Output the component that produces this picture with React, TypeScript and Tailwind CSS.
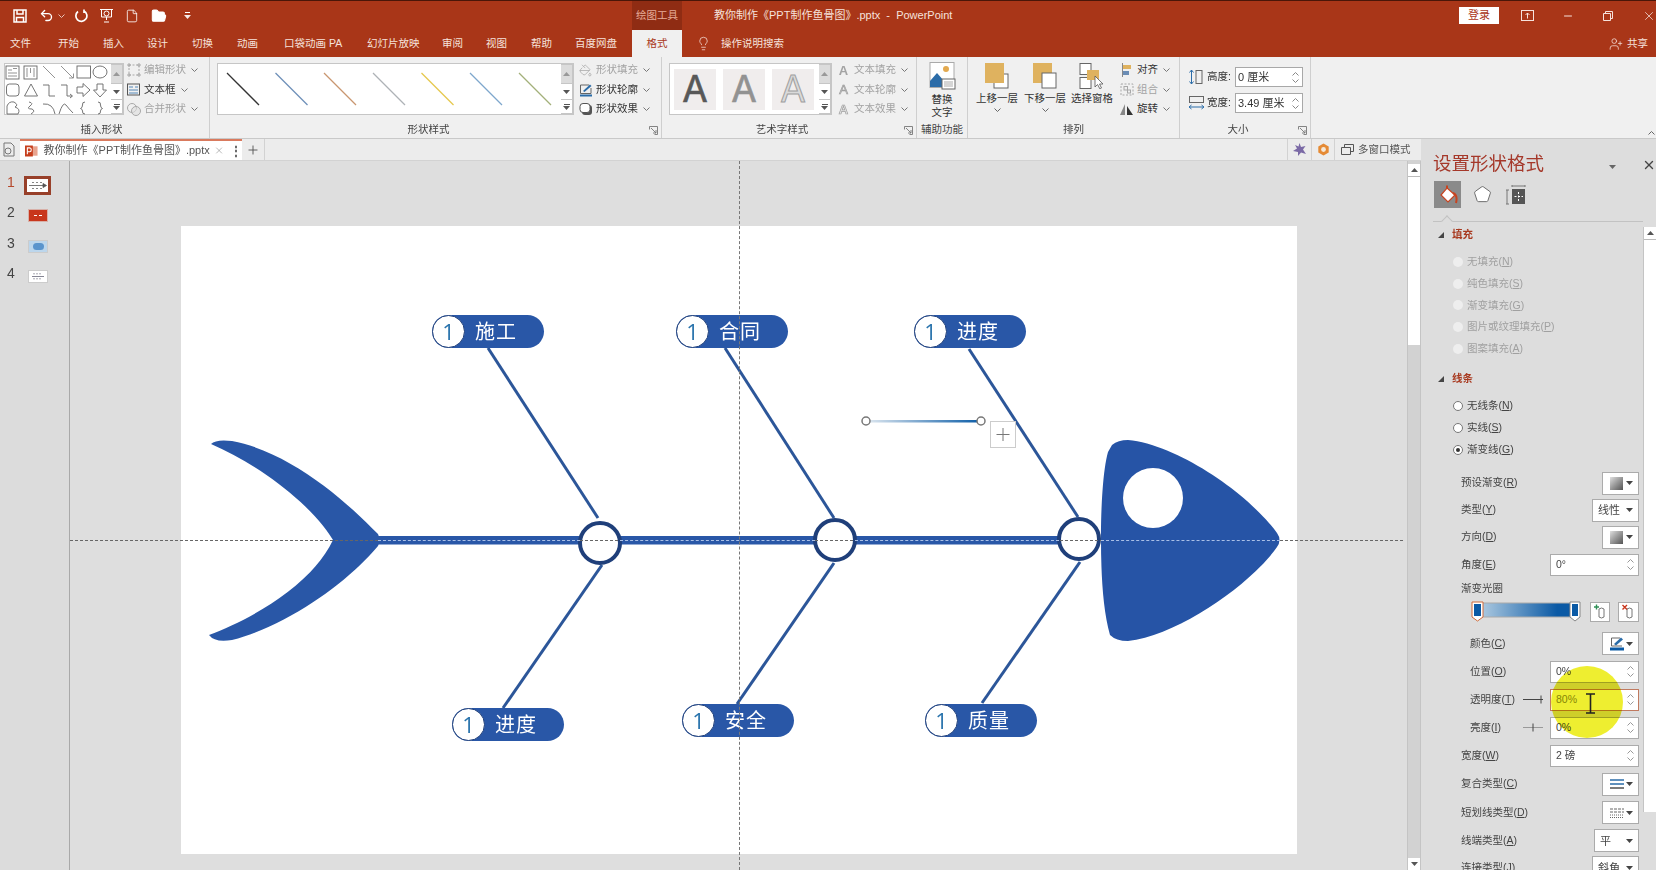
// App.tsx
import React from 'react';
import { Undo2, File, FolderOpen, Lightbulb, UserPlus, X, Minus, Plus, PaintBucket, Pentagon } from 'lucide-react';

const Caret: React.FC<{ className?: string }> = ({ className }) => (
  <svg width="7" height="4" viewBox="0 0 7 4" className={className}>
    <path d="M0.5 0.5 L3.5 3.5 L6.5 0.5" fill="none" stroke="currentColor" strokeWidth="1" />
  </svg>
);

const Drop: React.FC<{ className?: string }> = ({ className }) => (
  <svg width="7" height="4" viewBox="0 0 7 4" className={className}>
    <path d="M0 0 H7 L3.5 4 Z" fill="currentColor" />
  </svg>
);

const GalleryScroll: React.FC = () => (
  <div className="flex h-full w-[12px] flex-col border border-l-0 border-[#c6c6c6] text-[#555]">
    <div className="flex h-[18px] items-center justify-center bg-[#dcdcdc] text-[#999]">
      <Drop className="rotate-180" />
    </div>
    <div className="flex h-[17px] items-center justify-center border-y border-[#c6c6c6] bg-white">
      <Drop />
    </div>
    <div className="flex flex-1 flex-col items-center justify-center gap-[1px] bg-white">
      <div className="h-px w-[6px] bg-[#555]" />
      <Drop />
    </div>
  </div>
);

const GroupLabel: React.FC<{ text: string; className?: string; launcher?: boolean }> = ({ text, className, launcher }) => (
  <div className={`flex h-[16px] items-center justify-center text-[10.5px] text-[#444] ${className ?? ''}`}>
    {text}
    {launcher && (
      <svg width="9" height="9" viewBox="0 0 9 9" className="absolute bottom-[3px] right-[3px] text-[#777]">
        <path d="M0.5 3.5 V0.5 H8.5 V8.5 H5.5 M2 2 L7 7 M4 7 H7 V4" fill="none" stroke="currentColor" strokeWidth="0.9" />
      </svg>
    )}
  </div>
);

const MiniRow: React.FC<{ icon: React.ReactNode; text: string; off?: boolean; caret?: boolean; className?: string }> = ({ icon, text, off, caret = true, className }) => (
  <div className={`flex h-[19.5px] items-center text-[10.5px] ${off ? 'text-[#a3a3a3]' : 'text-[#333]'} ${className ?? ''}`}>
    <span className="mr-[3px] flex w-[15px] justify-center">{icon}</span>
    <span>{text}</span>
    {caret && <Caret className="ml-[5px] text-[#777]" />}
  </div>
);

const ShapesGrid: React.FC = () => (
  <svg viewBox="4 63 106 52" className="block h-[52px] w-[106px]" fill="none" stroke="#666" strokeWidth="0.9">
    <rect x="5" y="65" width="13" height="13" />
    <path d="M7 69 H11 M7 72 H16 M7 75 H16 M12 67.5 H16" strokeWidth="0.7" />
    <rect x="23" y="65" width="13" height="13" />
    <path d="M26 67 V76 M33 67 V76 M29.5 67 V72" strokeWidth="0.7" />
    <path d="M42 65 L54 77" stroke="#888" />
    <path d="M60 65 L72 77 M68 77 H72.5 V72.5" stroke="#888" />
    <rect x="76" y="65" width="13.5" height="12" />
    <ellipse cx="99" cy="71" rx="7" ry="6" />
    <rect x="5.5" y="83" width="12.5" height="12" rx="3" />
    <path d="M30 83 L36.5 95 H23.5 Z" />
    <path d="M42 84 H48 V95 H54" />
    <path d="M60 84 H66 V95 H71 M69 93 L71.5 95 L69 97" />
    <path d="M76 86 H82 V82.5 L89 89 L82 95.5 V92 H76 Z" />
    <path d="M96 83 H102 V89 H105.5 L99 96 L92.5 89 H96 Z" />
    <path d="M6 113 V105 Q8 100 13 101 Q18 104 14 106 Q20 108 17 113 Z" />
    <path d="M28 101 Q33 102 29 105 Q25 108 31 108 Q35 110 30 113" />
    <path d="M42 103 Q52 102 54 113" />
    <path d="M58 113 Q62 100 65 104 Q68 108 72 112" />
    <path d="M84 101 Q81 101 81.5 104 Q81.5 107 79.5 107.5 Q81.5 108 81.5 110 Q81 113 84 113" />
    <path d="M97 101 Q100 101 99.5 104 Q99.5 107 101.5 107.5 Q99.5 108 99.5 110 Q100 113 97 113" />
  </svg>
);

const LineGallery: React.FC = () => (
  <svg viewBox="0 0 343 50" className="block h-[50px] w-[343px]" strokeWidth="1.3">
    <path d="M9 9 L41 41" stroke="#333" />
    <path d="M57.5 9 L89.5 41" stroke="#6d8fb8" />
    <path d="M106 9 L138 41" stroke="#c99670" />
    <path d="M155 9 L187 41" stroke="#aeb2b6" />
    <path d="M203.5 9 L235.5 41" stroke="#e6c84c" />
    <path d="M252 9 L284 41" stroke="#7ea7cc" />
    <path d="M301 9 L333 41" stroke="#a3b07a" />
  </svg>
);

const ArtA: React.FC<{ className: string }> = ({ className }) => (
  <div className={`flex h-[41px] w-[42px] items-center justify-center bg-[#f0eded] font-['Inter',sans-serif] text-[37px] font-normal ${className}`}>A</div>
);

const Ribbon: React.FC = () => (
  <div className="flex h-[82px] border-b border-[#c9c9c9] bg-[#f0f0f0]">
    {/* 插入形状 */}
    <div className="relative flex w-[210px] flex-col border-r border-[#cfcfcf] pt-[6px]">
      <div className="flex h-[60px]">
        <div className="ml-[4px] flex h-[52px] border border-[#c6c6c6] bg-white">
          <ShapesGrid />
          <GalleryScroll />
        </div>
        <div className="ml-[2px] -mt-[2.5px]">
          <MiniRow off text="编辑形状" icon={<svg width="14" height="14" viewBox="0 0 14 14" fill="none" stroke="#a8a8a8"><path d="M2 2 H12 V12 H2 Z" strokeDasharray="2 1.5" /><path d="M1 1 H3 V3 H1 Z M11 1 H13 V3 H11 Z M1 11 H3 V13 H1 Z M11 11 H13 V13 H11 Z" /></svg>} />
          <MiniRow text="文本框" icon={<svg width="13" height="13" viewBox="0 0 13 13" fill="none" stroke="#555"><rect x="0.5" y="1" width="12" height="11" /><path d="M2 4 H6 M8 4 H11 M2 7 H11 M2 10 H11" strokeWidth="0.8" stroke="#2b6ca8" /></svg>} />
          <MiniRow off text="合并形状" icon={<svg width="14" height="14" viewBox="0 0 14 14" fill="none" stroke="#a8a8a8"><circle cx="5" cy="6" r="4.5" /><circle cx="9" cy="9" r="4.5" fill="#ddd" fillOpacity="0.6" /></svg>} />
        </div>
      </div>
      <GroupLabel text="插入形状" className="pr-[6px]" />
    </div>

    {/* 形状样式 */}
    <div className="relative flex w-[452px] flex-col border-r border-[#cfcfcf] pt-[6px]">
      <div className="flex h-[60px]">
        <div className="ml-[7px] flex h-[52px] border border-[#c6c6c6] bg-white">
          <LineGallery />
          <GalleryScroll />
        </div>
        <div className="ml-[4px] -mt-[2.5px]">
          <MiniRow off text="形状填充" icon={<PaintBucket size={13} strokeWidth={1.4} className="text-[#a8a8a8]" />} />
          <MiniRow text="形状轮廓" icon={<svg width="14" height="14" viewBox="0 0 14 14" fill="none"><path d="M10 2 H1.5 V10.5 H12 V5" stroke="#666" /><path d="M4 8 L11 1.5 L12.5 3 L5.5 9 Z" fill="#2b6ca8" /><path d="M1 12.5 H13" stroke="#2b6ca8" strokeWidth="2" /></svg>} />
          <MiniRow text="形状效果" icon={<svg width="14" height="14" viewBox="0 0 14 14"><rect x="3" y="3" width="10" height="10" rx="3" fill="#555" /><rect x="1" y="1.5" width="10" height="9" rx="3" fill="#fff" stroke="#555" /></svg>} />
        </div>
      </div>
      <GroupLabel text="形状样式" launcher className="pr-[14px]" />
    </div>

    {/* 艺术字样式 */}
    <div className="relative flex w-[255px] flex-col border-r border-[#cfcfcf] pt-[6px]">
      <div className="flex h-[60px]">
        <div className="ml-[7px] flex h-[52px] border border-[#c6c6c6] bg-white">
          <div className="flex w-[149px] items-center gap-[7px] pl-[4px]">
            <ArtA className="text-[#585858] [-webkit-text-stroke:0.6px_#585858]" />
            <ArtA className="text-[#929292] [-webkit-text-stroke:0.6px_#929292]" />
            <ArtA className="text-[#dadada] [-webkit-text-stroke:1px_#a0a0a0]" />
          </div>
          <GalleryScroll />
        </div>
        <div className="ml-[4px] -mt-[2.5px]">
          <MiniRow off text="文本填充" icon={<span className="text-[13px] font-bold leading-none">A</span>} />
          <MiniRow off text="文本轮廓" icon={<span className="text-[13px] leading-none text-[#dddddd] [-webkit-text-stroke:0.7px_#a0a0a0]">A</span>} />
          <MiniRow off text="文本效果" icon={<span className="text-[13px] font-bold leading-none text-[#e4e4e4] [-webkit-text-stroke:0.7px_#a0a0a0]">A</span>} />
        </div>
      </div>
      <GroupLabel text="艺术字样式" launcher className="pr-[14px]" />
    </div>

    {/* 辅助功能 */}
    <div className="flex w-[51px] flex-col items-center border-r border-[#cfcfcf] pt-[6px]">
      <div className="flex h-[60px] flex-col items-center">
        <svg width="27" height="28" viewBox="0 0 27 28" className="-mt-[1px]">
          <rect x="1" y="0.5" width="24" height="25" fill="#fff" stroke="#aaa" />
          <circle cx="17" cy="7" r="3" fill="#e3a94f" />
          <path d="M1 25 V19 L8 11 L15 19 L17 17 L21 21 V25 Z" fill="#2b6ca8" />
          <rect x="13" y="17" width="13" height="10" fill="#fff" stroke="#666" />
          <path d="M15 20 H24 M15 22 H24 M15 24 H24" stroke="#888" strokeWidth="0.7" />
        </svg>
        <div className="mt-[3px] text-center text-[10.5px] leading-[13px] text-[#333]">替换<br />文字</div>
      </div>
      <GroupLabel text="辅助功能" />
    </div>

    {/* 排列 */}
    <div className="flex w-[212px] flex-col border-r border-[#cfcfcf] pt-[6px]">
      <div className="flex h-[60px]">
        <div className="ml-[8px] flex w-[42px] flex-col items-center text-[10.5px] leading-[13px] text-[#333]">
          <svg width="24" height="26" viewBox="0 0 24 26"><rect x="9" y="11" width="14" height="14" fill="#fff" stroke="#666" /><rect x="0" y="0" width="19" height="20" fill="#dfb25f" /></svg>
          <div className="mt-[3px] whitespace-nowrap">上移一层</div>
          <Caret className="mt-[3px] text-[#666]" />
        </div>
        <div className="ml-[6px] flex w-[42px] flex-col items-center text-[10.5px] leading-[13px] text-[#333]">
          <svg width="24" height="26" viewBox="0 0 24 26"><rect x="0" y="0" width="19" height="20" fill="#dfb25f" /><rect x="9" y="10" width="14" height="15" fill="#fff" stroke="#666" /></svg>
          <div className="mt-[3px] whitespace-nowrap">下移一层</div>
          <Caret className="mt-[3px] text-[#666]" />
        </div>
        <div className="ml-[5px] flex w-[42px] flex-col items-center text-[10.5px] leading-[13px] text-[#333]">
          <svg width="26" height="26" viewBox="0 0 26 26"><rect x="1" y="0.5" width="11" height="11" fill="#fff" stroke="#666" /><rect x="1" y="14.5" width="11" height="11" fill="#fff" stroke="#666" /><rect x="8" y="7" width="12" height="10" fill="#dfb25f" /><path d="M16 13 V24 L18.5 21.5 L21 26 L22.5 25 L20.5 21 H24 Z" fill="#fff" stroke="#555" strokeWidth="0.8" /></svg>
          <div className="mt-[3px] whitespace-nowrap">选择窗格</div>
        </div>
        <div className="ml-[6px] -mt-[2.5px]">
          <MiniRow text="对齐" icon={<svg width="12" height="14" viewBox="0 0 12 14"><path d="M1.5 0 V14" stroke="#888" /><rect x="2" y="2" width="8" height="4" fill="#dfb25f" /><rect x="2" y="8" width="6" height="4" fill="#6b8db5" /></svg>} />
          <MiniRow off text="组合" icon={<svg width="14" height="13" viewBox="0 0 14 13" fill="none" stroke="#a8a8a8"><path d="M1 1 H13 V12 H1 Z" strokeDasharray="2 1.5" /><rect x="4" y="3.5" width="3.5" height="3.5" /><rect x="7.5" y="7" width="3" height="3" /></svg>} />
          <MiniRow text="旋转" icon={<svg width="14" height="13" viewBox="0 0 14 13"><path d="M5 12 V1 L0 12 Z" fill="#888" /><path d="M7 12 V3 L13 12 Z" fill="#333" /></svg>} />
        </div>
      </div>
      <GroupLabel text="排列" />
    </div>

    {/* 大小 */}
    <div className="relative flex w-[131px] flex-col border-r border-[#cfcfcf] pt-[6px]">
      <div className="flex h-[60px] flex-col gap-[6px] pl-[8px] pt-[4px] text-[10.5px] text-[#333]">
        <div className="flex h-[20px] items-center">
          <svg width="18" height="16" viewBox="0 0 18 16" fill="none"><path d="M3.5 1 V15 M1.5 3.5 L3.5 1 L5.5 3.5 M1.5 12.5 L3.5 15 L5.5 12.5" stroke="#2b6ca8" /><rect x="8" y="1.5" width="6" height="13" stroke="#666" /></svg>
          <span className="ml-[1px] w-[28px]">高度:</span>
          <div className="flex h-[20px] w-[68px] items-center justify-between border border-[#a8a8a8] bg-white pl-[2px] pr-[3px] text-[11px]">
            <span>0 厘米</span>
            <span className="flex flex-col gap-[3px] text-[#888]"><Caret className="rotate-180" /><Caret /></span>
          </div>
        </div>
        <div className="flex h-[20px] items-center">
          <svg width="18" height="16" viewBox="0 0 18 16" fill="none"><rect x="1.5" y="1.5" width="14" height="6" stroke="#666" /><path d="M1 12 H16 M3.5 10 L1 12 L3.5 14 M13.5 10 L16 12 L13.5 14" stroke="#2b6ca8" /></svg>
          <span className="ml-[1px] w-[28px]">宽度:</span>
          <div className="flex h-[20px] w-[68px] items-center justify-between border border-[#a8a8a8] bg-white pl-[2px] pr-[3px] text-[11px]">
            <span>3.49 厘米</span>
            <span className="flex flex-col gap-[3px] text-[#888]"><Caret className="rotate-180" /><Caret /></span>
          </div>
        </div>
      </div>
      <GroupLabel text="大小" launcher className="pr-[14px]" />
    </div>
    <div className="flex flex-1 items-end justify-end pb-[3px] pr-[1px]">
      <Caret className="rotate-180 text-[#666]" />
    </div>
  </div>
);

const tabs = [
  { t: '文件', c: 'w-[48px]' },
  { t: '开始', c: 'w-[45px]' },
  { t: '插入', c: 'w-[44px]' },
  { t: '设计', c: 'w-[45px]' },
  { t: '切换', c: 'w-[45px]' },
  { t: '动画', c: 'w-[47px]' },
  { t: '口袋动画 PA', c: 'w-[83px]' },
  { t: '幻灯片放映', c: 'w-[75px]' },
  { t: '审阅', c: 'w-[44px]' },
  { t: '视图', c: 'w-[45px]' },
  { t: '帮助', c: 'w-[44px]' },
  { t: '百度网盘', c: 'w-[57px]' },
];

const TitleBar: React.FC = () => (
  <div className="h-[57px] border-t border-[#4a1608] bg-[#a93618] text-[#f6e2dc]">
    <div className="flex h-[29px] items-center">
      <div className="flex w-[632px] items-center text-white">
        <svg width="14" height="14" viewBox="0 0 14 14" fill="none" stroke="currentColor" strokeWidth="1.5" className="ml-[13px]">
          <path d="M1 1 H13 V13 H1 Z M4 1 V5 H10 V1 M3.5 13 V8.5 H10.5 V13" />
        </svg>
        <Undo2 size={15} strokeWidth={2.2} className="ml-[12px]" />
        <Caret className="ml-[4px] opacity-70" />
        <svg width="14" height="14" viewBox="0 0 14 14" fill="none" stroke="currentColor" strokeWidth="1.7" className="ml-[9px]">
          <path d="M4 2.5 A5.5 5.5 0 1 0 10 2 M10 0.5 V4" />
        </svg>
        <svg width="15" height="15" viewBox="0 0 15 15" fill="none" stroke="currentColor" strokeWidth="1" className="ml-[11px]">
          <path d="M1 1.5 H14 M2.5 1.5 V9 H12.5 V1.5" />
          <circle cx="7.5" cy="5.5" r="2.5" />
          <path d="M7.5 9 V12 M5 14 H10" />
        </svg>
        <File size={14} strokeWidth={1.4} className="ml-[11px]" />
        <FolderOpen size={16} strokeWidth={1.6} fill="currentColor" className="ml-[12px]" />
        <div className="ml-[17px] flex flex-col items-center gap-[2px]">
          <div className="h-px w-[5px] bg-white" />
          <Drop className="opacity-90" />
        </div>
      </div>
      <div className="flex h-[29px] w-[50px] items-center justify-center bg-[#8f2c13] text-[10.5px] text-[#e6ab98]">绘图工具</div>
      <div className="ml-[32px] whitespace-pre text-[11px]">教你制作《PPT制作鱼骨图》.pptx  -  PowerPoint</div>
      <div className="flex-1" />
      <div className="flex h-[17px] w-[40px] items-center justify-center bg-white text-[11px] text-[#a93618]">登录</div>
      <svg width="13" height="11" viewBox="0 0 13 11" fill="none" stroke="currentColor" className="ml-[22px]">
        <rect x="0.5" y="0.5" width="12" height="10" />
        <path d="M6.5 8.5 V3 M4.5 5 L6.5 3 L8.5 5" />
      </svg>
      <Minus size={12} className="ml-[28px]" />
      <svg width="10" height="10" viewBox="0 0 10 10" fill="none" stroke="currentColor" className="ml-[29px]">
        <path d="M0.5 2.5 H7.5 V9.5 H0.5 Z M2.5 2.5 V0.5 H9.5 V7.5 H7.5" />
      </svg>
      <X size={14} strokeWidth={1.3} className="ml-[29px]" />
    </div>
    <div className="flex h-[27px] items-center pl-[10px] text-[10.5px]">
      {tabs.map((tab) => (
        <div key={tab.t} className={`whitespace-nowrap ${tab.c}`}>{tab.t}</div>
      ))}
      <div className="flex h-[27px] w-[50px] items-center justify-center bg-[#f0f0f0] text-[#a93618]">格式</div>
      <Lightbulb size={15} strokeWidth={1.2} className="ml-[14px]" />
      <div className="ml-[10px]">操作说明搜索</div>
      <div className="flex-1" />
      <UserPlus size={14} strokeWidth={1.3} className="mr-[4px]" />
      <div className="mr-[8px]">共享</div>
    </div>
  </div>
);

const TabStrip: React.FC = () => (
  <div className="flex h-[22px] items-stretch border-b border-[#d2d2d2] bg-[#ececec] text-[#555]">
    <svg width="14" height="15" viewBox="0 0 14 15" fill="none" stroke="#777" className="ml-[2px] mt-[3px]">
      <path d="M2 1 H9 L12 4 V14 H2 Z" />
      <circle cx="6" cy="9" r="3" />
    </svg>
    <div className="ml-[4px] flex w-[222px] items-center border-t-2 border-[#d97a5e] bg-white text-[11px]">
      <svg width="16" height="14" viewBox="0 0 16 14" className="ml-[5px]">
        <rect x="5" y="1" width="11" height="12" fill="#e8a48f" />
        <rect x="0" y="0" width="10" height="14" fill="#c63f1d" />
        <path d="M3 11 V3 H6 Q8 3 8 5.5 Q8 8 6 8 H3" fill="none" stroke="#fff" strokeWidth="1.4" />
      </svg>
      <span className="ml-[6px] whitespace-nowrap">教你制作《PPT制作鱼骨图》.pptx</span>
      <X size={13} strokeWidth={1.2} className="ml-[4px] text-[#777]" />
      <span className="ml-[6px] text-[12px] font-bold leading-none">⋮</span>
    </div>
    <div className="flex w-[23px] items-center justify-center border-r border-[#d2d2d2]">
      <Plus size={14} strokeWidth={1.6} />
    </div>
    <div className="flex-1" />
    <div className="flex w-[24px] items-center justify-center border-l border-[#d2d2d2]">
      <svg width="13" height="13" viewBox="0 0 13 13"><path d="M6.5 0 L8 4 L12.5 3 L10 6.5 L13 11 L8 9.5 L5 13 L5 9 L0 8 L4 5.5 L2 2 L5.5 3.5 Z" fill="#7b6aa6" /></svg>
    </div>
    <div className="flex w-[23px] items-center justify-center border-l border-[#d2d2d2]">
      <svg width="13" height="13" viewBox="0 0 13 13"><path d="M6.5 0.5 L11.7 3.5 V9.5 L6.5 12.5 L1.3 9.5 V3.5 Z" fill="#e58a34" /><circle cx="6.5" cy="6.5" r="2.4" fill="#f5e8d8" /></svg>
    </div>
    <div className="flex w-[87px] items-center border-l border-[#d2d2d2] pl-[6px] text-[10.5px]">
      <svg width="13" height="11" viewBox="0 0 13 11" fill="none" stroke="#555"><path d="M0.5 3.5 H9.5 V10.5 H0.5 Z M3.5 3.5 V0.5 H12.5 V7.5 H9.5" /></svg>
      <span className="ml-[4px] whitespace-nowrap">多窗口模式</span>
    </div>
  </div>
);

const ThumbStrip: React.FC = () => (
  <div className="flex w-[70px] flex-col border-r border-[#a9a9a9] bg-[#dcdcdc] pt-[9px]">
    <div className="flex h-[30.5px] items-center pl-[7px]">
      <span className="-mt-[6px] w-[10px] text-[14px] text-[#b5492c]">1</span>
      <div className="ml-[7px] flex h-[19px] w-[27px] items-center justify-center border-[3px] border-[#98402a] bg-white">
        <svg width="19" height="11" viewBox="0 0 19 11" stroke="#555" fill="none" strokeWidth="0.8">
          <path d="M1 5.5 H17" />
          <path d="M5 2 V3 M9 2 V3 M13 2 V3 M5 8 V9 M9 8 V9 M13 8 V9" strokeWidth="1.4" />
          <path d="M15 3.5 L18.5 5.5 L15 7.5 Z" fill="#555" />
        </svg>
      </div>
    </div>
    <div className="flex h-[30.5px] items-center pl-[7px]">
      <span className="-mt-[6px] w-[10px] text-[14px] text-[#444]">2</span>
      <div className="ml-[11px] flex h-[13px] w-[20px] items-center justify-center gap-[2px] border border-[#d8b0a8] bg-[#c8361c]">
        <div className="h-px w-[3px] bg-white" />
        <div className="h-px w-[3px] bg-white" />
      </div>
    </div>
    <div className="flex h-[30.5px] items-center pl-[7px]">
      <span className="-mt-[6px] w-[10px] text-[14px] text-[#444]">3</span>
      <div className="ml-[11px] flex h-[13px] w-[20px] items-center justify-center border border-[#ccc] bg-[#bcd6ec]">
        <div className="h-[7px] w-[11px] rounded-full bg-[#5a94cc]" />
      </div>
    </div>
    <div className="flex h-[30.5px] items-center pl-[7px]">
      <span className="-mt-[6px] w-[10px] text-[14px] text-[#444]">4</span>
      <div className="ml-[11px] flex h-[13px] w-[20px] items-center justify-center border border-[#ccc] bg-white">
        <svg width="14" height="9" viewBox="0 0 14 9" stroke="#667" fill="none" strokeWidth="0.8">
          <path d="M1 4.5 H13" />
          <path d="M3 1 V3 M6 1 V3 M9 1 V3 M3 6 V8 M6 6 V8 M9 6 V8" strokeDasharray="1 0.6" />
        </svg>
      </div>
    </div>
  </div>
);

const Pill: React.FC<{ text: string; className: string }> = ({ text, className }) => (
  <div className={`absolute flex h-[33px] w-[112px] items-center rounded-full bg-[#2957a7] text-white ${className}`}>
    <div className="flex h-[33px] w-[33px] items-center justify-center rounded-full border border-[#1f3f7a] bg-white font-['Open_Sans',sans-serif] text-[22px] text-[#2a74ad]">1</div>
    <span className="ml-[10px] text-[20px] tracking-[1px]">{text}</span>
  </div>
);

const Slide: React.FC = () => (
  <div className="relative h-[628px] w-[1116px] bg-white">
    <svg viewBox="181 226 1116 628" className="block h-[628px] w-[1116px]">
      <defs>
        <linearGradient id="selLine" x1="0" y1="0" x2="1" y2="0">
          <stop offset="0" stopColor="#dfe8f0" />
          <stop offset="1" stopColor="#0b5ca7" />
        </linearGradient>
      </defs>
      <path d="M211 444 Q216 439 232 441 C290 452 345 500 378 534 Q381 540 378 546 C350 580 290 625 232 640 Q215 643 209 635 C250 620 312 585 333 540 C312 505 260 465 211 444 Z" fill="#2957a7" />
      <rect x="370" y="536" width="720" height="8.5" fill="#2957a7" />
      <g stroke="#2c5699" strokeWidth="3" fill="none">
        <path d="M488 348 L598 518" />
        <path d="M602 565 L503 708" />
        <path d="M725 348 L834 518" />
        <path d="M834 563 L737 704" />
        <path d="M969 349 L1078 517" />
        <path d="M1080 562 L982 703" />
      </g>
      <g fill="#fff" stroke="#1f3f7a" strokeWidth="4">
        <circle cx="600" cy="543" r="20" />
        <circle cx="835" cy="540" r="20" />
        <circle cx="1079" cy="539" r="20" />
      </g>
      <path d="M1112 445 Q1118 440 1128 440 C1180 445 1252 497 1277 533 Q1282 540 1277 547 C1252 583 1180 635 1128 641 Q1116 641 1110 635 C1103 610 1101 575 1101 540 C1101 505 1103 470 1108 452 Z" fill="#2654a6" />
      <circle cx="1153" cy="498" r="30" fill="#fff" />
      <rect x="866" y="420" width="115" height="2.5" fill="url(#selLine)" />
      <circle cx="866" cy="421" r="4" fill="#fff" stroke="#777" strokeWidth="1.5" />
      <circle cx="981" cy="421" r="4" fill="#fff" stroke="#777" strokeWidth="1.5" />
      <rect x="990.5" y="421.5" width="25" height="26" fill="#fff" stroke="#ccc" />
      <path d="M1003 428 V441 M996.5 434.5 H1009.5" stroke="#777" />
    </svg>
    <Pill text="施工" className="left-[251px] top-[89px]" />
    <Pill text="合同" className="left-[495px] top-[89px]" />
    <Pill text="进度" className="left-[733px] top-[89px]" />
    <Pill text="进度" className="left-[271px] top-[482px]" />
    <Pill text="安全" className="left-[501px] top-[478px]" />
    <Pill text="质量" className="left-[744px] top-[478px]" />
  </div>
);

const Canvas: React.FC = () => (
  <div className="relative min-w-0 flex-1 overflow-hidden bg-[#dedede] pl-[111px] pt-[65px]">
    <Slide />
    <div className="absolute left-0 right-[4px] top-[379px] border-t border-dashed border-[#666]" />
    <div className="absolute bottom-0 left-[669px] top-0 border-l border-dashed border-[#777]" />
    {/* 参考线压在蓝色图形上时显示为浅色 */}
    <div className="absolute left-[308px] top-[379px] w-[202px] border-t border-dashed border-[#a9bfe6] bg-[#2957a7]" />
    <div className="absolute left-[550px] top-[379px] w-[195px] border-t border-dashed border-[#a9bfe6] bg-[#2957a7]" />
    <div className="absolute left-[785px] top-[379px] w-[204px] border-t border-dashed border-[#a9bfe6] bg-[#2957a7]" />
    <div className="absolute left-[1031px] top-[379px] w-[179px] border-t border-dashed border-[#a9bfe6] bg-[#2654a6]" />
  </div>
);

const Scrollbar: React.FC = () => (
  <div className="flex w-[14px] flex-col border-x border-[#c4c4c4] bg-[#d2d2d2] pt-[3px]">
    <div className="flex h-[13px] items-center justify-center border-b border-[#bbb] bg-white text-[#555]">
      <Drop className="rotate-180" />
    </div>
    <div className="h-[168px] bg-white" />
    <div className="flex-1" />
    <div className="flex h-[12px] items-center justify-center bg-white text-[#555]">
      <Drop />
    </div>
  </div>
);

const Label: React.FC<{ text: string; hot: string; className?: string }> = ({ text, hot, className }) => (
  <span className={`whitespace-nowrap text-[10.5px] text-[#444] ${className ?? ''}`}>
    {text}(<span className="underline">{hot}</span>)
  </span>
);

const Row: React.FC<{ h: string; label: React.ReactNode; inset?: boolean; children?: React.ReactNode }> = ({ h, label, inset, children }) => (
  <div className={`flex items-center pr-[17px] ${h} ${inset ? 'pl-[49px]' : 'pl-[40px]'}`}>
    {label}
    <div className="flex-1" />
    {children}
  </div>
);

const Spin: React.FC<{ value: string; className?: string; textClass?: string }> = ({ value, className, textClass }) => (
  <div className={`flex h-[22px] w-[89px] items-center justify-between border bg-white pl-[5px] pr-[4px] text-[10.5px] ${className ?? 'border-[#ababab]'} ${textClass ?? 'text-[#444]'}`}>
    <span>{value}</span>
    <span className="flex flex-col gap-[3px] text-[#999]"><Caret className="rotate-180" /><Caret /></span>
  </div>
);

const PickBtn: React.FC<{ children: React.ReactNode }> = ({ children }) => (
  <div className="flex h-[23px] w-[37px] items-center justify-between border border-[#ababab] bg-white pl-[7px] pr-[5px] text-[#444]">
    {children}
    <Drop />
  </div>
);

const Select: React.FC<{ value: string; w: string }> = ({ value, w }) => (
  <div className={`flex h-[23px] items-center justify-between border border-[#ababab] bg-white pl-[5px] pr-[5px] text-[11px] text-[#444] ${w}`}>
    {value}
    <Drop />
  </div>
);

const Swatch: React.FC = () => <div className="h-[13px] w-[13px] bg-linear-to-br from-[#e0e0e0] to-[#555]" />;

const Radio: React.FC<{ text: string; hot: string; off?: boolean; on?: boolean; h: string }> = ({ text, hot, off, on, h }) => (
  <div className={`flex items-center pl-[32px] ${h}`}>
    <div className={`flex h-[10px] w-[10px] items-center justify-center rounded-full ${off ? 'bg-[#eeeeee]' : 'border border-[#777] bg-white'}`}>
      {on && <div className="h-[4px] w-[4px] rounded-full bg-[#333]" />}
    </div>
    <Label text={text} hot={hot} className={`ml-[4px] ${off ? 'text-[#a0a0a0]' : ''}`} />
  </div>
);

const SectionHead: React.FC<{ text: string; className?: string }> = ({ text, className }) => (
  <div className={`flex h-[20px] items-center pl-[17px] ${className ?? ''}`}>
    <svg width="6" height="6" viewBox="0 0 6 6"><path d="M6 0 V6 H0 Z" fill="#444" /></svg>
    <span className="ml-[8px] text-[10.5px] font-bold text-[#a83a20]">{text}</span>
  </div>
);

const Panel: React.FC = () => (
  <div className="relative w-[235px] overflow-hidden bg-[#dddddd]">
    <div className="flex h-[42px] items-end pl-[12px]">
      <span className="mb-[2px] w-[112px] shrink-0 whitespace-nowrap text-[18.5px] leading-[30px] text-[#a5382a]">设置形状格式</span>
      <Drop className="mb-[12px] ml-[64px] text-[#666]" />
      <X size={14} strokeWidth={2.4} className="mb-[9px] ml-[26px] text-[#444]" />
    </div>
    <div className="flex h-[27px] items-center pl-[13px]">
      <div className="flex h-[27px] w-[27px] items-center justify-center bg-[#8a8a8a]">
        <svg width="22" height="22" viewBox="0 0 22 22" fill="none">
          <path d="M10 4 L18 11 L11 18 L4 11 Z" fill="#fff" stroke="#c8431f" strokeWidth="1.2" />
          <path d="M10 4 V1.5 M16 9 Q21 11 19 19" stroke="#c8431f" strokeWidth="2" />
        </svg>
      </div>
      <Pentagon size={19} strokeWidth={1.2} fill="#fff" className="ml-[12px] text-[#666]" />
      <svg width="20" height="20" viewBox="0 0 20 20" className="ml-[14px]">
        <path d="M1 5 V19 M0 5 H3 M0 19 H3 M6 1 H19 M6 0 V2 M19 0 V2" stroke="#777" fill="none" />
        <rect x="6" y="4" width="13" height="15" fill="#555" />
        <path d="M12.5 7 V16 M8.5 11.5 H17" stroke="#fff" strokeDasharray="2 1.5" />
      </svg>
    </div>
    <div className="relative mt-[13px] ml-[12px] h-px w-[210px] bg-[#c2c2c2]">
      <div className="absolute -top-[4px] left-[10px] h-[8px] w-[8px] rotate-45 border-l border-t border-[#c2c2c2] bg-[#dddddd]" />
    </div>

    <div className="absolute bottom-[58px] right-0 top-[88px] flex w-[13px] flex-col border-l border-[#c4c4c4] bg-white">
      <div className="flex h-[13px] items-center justify-center border-b border-[#bbb] text-[#555]"><Drop className="rotate-180" /></div>
    </div>

    <SectionHead text="填充" className="mt-[3px]" />
    <div className="mt-[6px]">
      <Radio off text="无填充" hot="N" h="h-[21.75px]" />
      <Radio off text="纯色填充" hot="S" h="h-[21.75px]" />
      <Radio off text="渐变填充" hot="G" h="h-[21.75px]" />
      <Radio off text="图片或纹理填充" hot="P" h="h-[21.75px]" />
      <Radio off text="图案填充" hot="A" h="h-[21.75px]" />
    </div>
    <SectionHead text="线条" className="mt-[9px]" />
    <div className="mt-[6px]">
      <Radio text="无线条" hot="N" h="h-[22px]" />
      <Radio text="实线" hot="S" h="h-[22px]" />
      <Radio on text="渐变线" hot="G" h="h-[22px]" />
    </div>
    <div className="mt-[9px]">
      <Row h="h-[27px]" label={<Label text="预设渐变" hot="R" />}><PickBtn><Swatch /></PickBtn></Row>
      <Row h="h-[27px]" label={<Label text="类型" hot="Y" />}><Select value="线性" w="w-[47px]" /></Row>
      <Row h="h-[27px]" label={<Label text="方向" hot="D" />}><PickBtn><Swatch /></PickBtn></Row>
      <Row h="h-[28px]" label={<Label text="角度" hot="E" />}><Spin value="0°" /></Row>
      <div className="flex h-[20px] items-center pl-[40px] text-[10.5px] text-[#444]">渐变光圈</div>
      <div className="flex h-[26px] items-center justify-between pl-[49px] pr-[17px]">
        <svg width="112" height="22" viewBox="0 0 112 22">
          <defs>
            <linearGradient id="stopBar" x1="0" y1="0" x2="1" y2="0">
              <stop offset="0" stopColor="#bcd4e6" />
              <stop offset="0.8" stopColor="#0b5aa5" />
              <stop offset="1" stopColor="#0b5aa5" />
            </linearGradient>
          </defs>
          <rect x="4" y="2" width="104" height="14" fill="url(#stopBar)" stroke="#aaa" />
          <path d="M2 1 H13 V16 L7.5 20 L2 16 Z" fill="#fff" stroke="#d06a3a" />
          <rect x="4" y="3" width="7" height="12" fill="#0b5aa5" />
          <path d="M100 1 H110 V16 L105 20 L100 16 Z" fill="#fff" stroke="#888" />
          <rect x="102" y="3" width="6" height="12" fill="#0b5aa5" />
        </svg>
        <div className="flex gap-[8px]">
          <div className="flex h-[20px] w-[20px] items-center justify-center border border-[#ababab] bg-white">
            <svg width="13" height="15" viewBox="0 0 13 15" fill="none"><path d="M5 5 V13 Q7.5 15 10 13 V5 Q7.5 3 5 5" stroke="#777" /><path d="M0 3 H5 M2.5 0.5 V5.5" stroke="#2f8f56" strokeWidth="1.4" /></svg>
          </div>
          <div className="flex h-[20px] w-[21px] items-center justify-center border border-[#ababab] bg-white">
            <svg width="13" height="15" viewBox="0 0 13 15" fill="none"><path d="M5 5 V13 Q7.5 15 10 13 V5 Q7.5 3 5 5" stroke="#777" /><path d="M0.5 1 L5 5.5 M5 1 L0.5 5.5" stroke="#c8361c" strokeWidth="1.4" /></svg>
          </div>
        </div>
      </div>
      <div className="mt-[5px]">
        <Row inset h="h-[28px]" label={<Label text="颜色" hot="C" />}>
          <PickBtn>
            <svg width="15" height="15" viewBox="0 0 15 15" fill="none"><path d="M10 2 H1.5 V10 H12" stroke="#666" /><path d="M4 8 L11 1.5 L13 3.5 L6 9.5 Z" fill="#2b6ca8" /><path d="M0 13 H14" stroke="#0b5aa5" strokeWidth="3" /></svg>
          </PickBtn>
        </Row>
        <Row inset h="h-[28px]" label={<Label text="位置" hot="O" />}><Spin value="0%" /></Row>
        <Row inset h="h-[28px]" label={<Label text="透明度" hot="T" />}>
          <svg width="20" height="9" viewBox="0 0 20 9"><path d="M0 4.5 H20 M18 0.5 V8.5" stroke="#444" /></svg>
          <Spin value="80%" className="ml-[7px] border-[#c07a60]" textClass="text-[#8f8f20]" />
        </Row>
        <Row inset h="h-[28px]" label={<Label text="亮度" hot="I" />}>
          <svg width="20" height="9" viewBox="0 0 20 9"><path d="M0 4.5 H20" stroke="#999" /><path d="M10 0.5 V8.5" stroke="#444" /></svg>
          <Spin value="0%" className="ml-[7px] border-[#ababab]" />
        </Row>
        <Row h="h-[28px]" label={<Label text="宽度" hot="W" />}><Spin value="2 磅" /></Row>
        <Row h="h-[29px]" label={<Label text="复合类型" hot="C" />}>
          <PickBtn><svg width="14" height="10" viewBox="0 0 14 10"><path d="M0 1 H14 M0 5 H14" stroke="#2b6ca8" strokeWidth="1.4" /><path d="M0 9 H14" stroke="#444" strokeWidth="1.4" /></svg></PickBtn>
        </Row>
        <Row h="h-[28px]" label={<Label text="短划线类型" hot="D" />}>
          <PickBtn><svg width="14" height="10" viewBox="0 0 14 10" stroke="#666"><path d="M0 1 H14 M0 4 H14" strokeDasharray="3 1" /><path d="M0 7 H14 M0 9.5 H14" strokeDasharray="1 1" /></svg></PickBtn>
        </Row>
        <Row h="h-[28px]" label={<Label text="线端类型" hot="A" />}><Select value="平" w="w-[45px]" /></Row>
        <Row h="h-[26px]" label={<Label text="连接类型" hot="J" />}><Select value="斜角" w="w-[47px]" /></Row>
      </div>
    </div>

    <div className="absolute left-[130px] top-[527px] h-[72px] w-[72px] rounded-full bg-[#eeee30] mix-blend-multiply" />
    <svg width="11" height="21" viewBox="0 0 11 21" className="absolute left-[164px] top-[554px] text-[#222]">
      <path d="M1 1 H10 M5.5 1 V20 M1 20 H10" stroke="currentColor" strokeWidth="1.6" fill="none" />
    </svg>
  </div>
);

export default function App() {
  return (
    <div className="flex h-[870px] w-[1656px] flex-col overflow-hidden font-['Liberation_Sans','Noto_Sans_CJK_SC',sans-serif]">
      <TitleBar />
      <Ribbon />
      <div className="flex min-h-0 flex-1">
        <div className="flex w-[1421px] flex-col">
          <TabStrip />
          <div className="flex min-h-0 flex-1">
            <ThumbStrip />
            <Canvas />
            <Scrollbar />
          </div>
        </div>
        <Panel />
      </div>
    </div>
  );
}
